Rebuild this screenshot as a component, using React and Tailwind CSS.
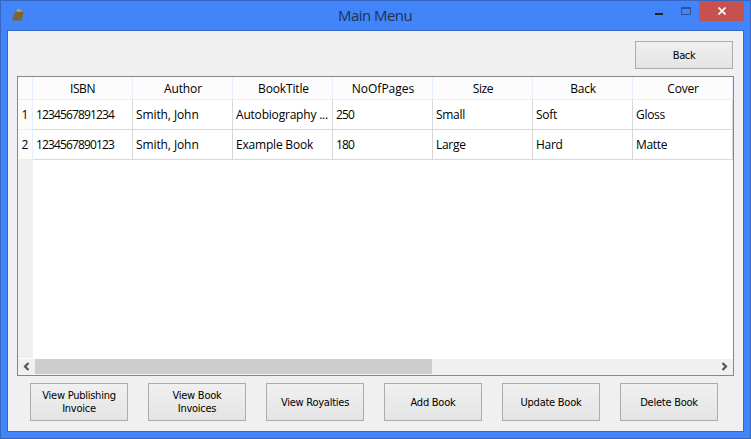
const columns = [
  { label: 'ISBN', cls: 'tracking-[-0.4px]' },
  { label: 'Author', cls: 'tracking-[-0.1px] pl-px' },
  { label: 'BookTitle', cls: 'tracking-[-0.15px] pl-[2px]' },
  { label: 'NoOfPages', cls: 'tracking-[0px] pl-px' },
  { label: 'Size', cls: 'tracking-[-0.4px] pl-px' },
  { label: 'Back', cls: 'tracking-[-0.3px] pl-px' },
  { label: 'Cover', cls: 'tracking-[-0.2px] pl-px' },
];

const rows = [
  ['1234567891234', 'Smith, John', 'Autobiography ...', '250', 'Small', 'Soft', 'Gloss'],
  ['1234567890123', 'Smith, John', 'Example Book', '180', 'Large', 'Hard', 'Matte'],
];

const cellTracking = [
  'tracking-[-0.86px]',
  'tracking-[-0.1px]',
  'tracking-[-0.2px]',
  'tracking-[-0.86px]',
  'tracking-[-0.3px]',
  'tracking-[-0.3px]',
  'tracking-[-0.3px]',
];

const actions = [
  ['View Publishing', 'Invoice'],
  ['View Book', 'Invoices'],
  ['View Royalties'],
  ['Add Book'],
  ['Update Book'],
  ['Delete Book'],
];

function PushButton({ lines, className }) {
  return (
    <button
      className={`flex w-[98px] shrink-0 flex-col items-center justify-center border border-[#acacac] bg-linear-to-b from-[#f0f0f0] to-[#e4e4e4] font-['DejaVu_Sans_Condensed','Noto_Sans',sans-serif] text-[11px] leading-[13px] text-black ${className}`}
    >
      {lines.map((line) => (
        <span key={line} className="whitespace-nowrap">{line}</span>
      ))}
    </button>
  );
}

function TitleBar() {
  return (
    <header className="flex h-[29px] shrink-0 items-start">
      <svg className="mt-[7px] ml-[10px] h-[14px] w-[14px] shrink-0" viewBox="0 0 14 14">
        <path d="M4 4h8.500l-2 8.500H1l1-3.500z" fill="#84671c" />
        <path d="M6 1h3.500v1.500h1.500V4H6z" fill="#a69a45" />
        <path d="M6 1.500h3v1H6z" fill="#cdb92c" />
        <path d="M3 7l3-1M2.500 9l3.500-1M2 11h6M5 5.500l1 4.500" stroke="#66695a" strokeWidth=".8" />
      </svg>
      <h1 className="flex-1 pl-[313px] font-['Open_Sans',sans-serif] text-[15px] leading-[29px] whitespace-nowrap text-[#24324d]">
        <span className="tracking-[-0.55px]">Main Menu</span>
      </h1>
      <svg className="h-5 w-[50px] shrink-0" viewBox="0 0 50 20" shapeRendering="crispEdges">
        <path d="M6 12h8v2H6z" fill="#222222" />
        <path d="M32 6h10v8H32zM33 8v5h8V8z" fill="#315296" fillRule="evenodd" />
      </svg>
      <div className="mr-[6px] flex h-5 w-[45px] shrink-0 items-center justify-center bg-[#c75050]">
        <svg className="h-2 w-2" viewBox="0 0 8 8">
          <path d="M.5.5l7 7M7.5.5l-7 7" stroke="#fff" strokeWidth="1.7" />
        </svg>
      </div>
    </header>
  );
}

function BookTable() {
  return (
    <section className="flex h-[300px] w-[717px] flex-col border border-[#828790] bg-white font-['Open_Sans','Noto_Sans',sans-serif] text-[12px] text-black">
      <div className="flex h-[23px] shrink-0 border-b border-[#e5f0fc] bg-[#fcfcfc]">
        <div className="w-[15px] border-r border-[#e5f0fc]" />
        {columns.map((c) => (
          <div key={c.label} className={`w-[100px] border-r border-[#e5f0fc] text-center leading-[24px] ${c.cls}`}>
            {c.label}
          </div>
        ))}
      </div>
      {rows.map((row, i) => (
        <div key={row[0]} className="flex h-[30px] shrink-0">
          <div className="w-[15px] border-r border-b border-[#e5f0fc] bg-[#fcfcfc] text-center leading-[30px]">{i + 1}</div>
          {row.map((value, j) => (
            <div
              key={columns[j].label}
              className={`w-[100px] border-r border-b border-[#d8d8d8] pl-[3px] leading-[30px] whitespace-nowrap ${cellTracking[j]}`}
            >
              {value}
            </div>
          ))}
        </div>
      ))}
      <div className="w-[15px] flex-1 bg-[#f0f0f0]" />
      <div className="mt-px flex h-4 shrink-0 items-center bg-[#f0f0f0]">
        <svg className="h-4 w-[17px]" viewBox="0 0 17 16" fill="none">
          <path d="M10.500 4L7 7.500l3.500 3.500" stroke="#555" strokeWidth="2.200" />
        </svg>
        <div className="h-[15px] w-[397px] self-start bg-[#cdcdcd]" />
        <svg className="ml-auto h-4 w-[17px]" viewBox="0 0 17 16" fill="none">
          <path d="M6.500 4L10 7.500l-3.500 3.500" stroke="#555" strokeWidth="2.200" />
        </svg>
      </div>
    </section>
  );
}

export default function App() {
  return (
    <div className="flex h-[439px] w-[751px] flex-col overflow-hidden border border-[#3566c0] bg-[#4284fa]">
      <TitleBar />
      <main className="mx-[6px] flex h-[402px] w-[737px] shrink-0 flex-col border border-[#3669c6] bg-[#f0f0f0] pt-[10px] pl-[9px]">
        <div className="flex w-[716px] justify-end">
          <PushButton lines={['Back']} className="h-7 tracking-[-0.4px]" />
        </div>
        <div className="mt-[7px]">
          <BookTable />
        </div>
        <div className="mt-[7px] ml-[13px] flex gap-5">
          {actions.map((lines) => (
            <PushButton key={lines[0]} lines={lines} className="h-[38px] tracking-[-0.25px]" />
          ))}
        </div>
      </main>
    </div>
  );
}
